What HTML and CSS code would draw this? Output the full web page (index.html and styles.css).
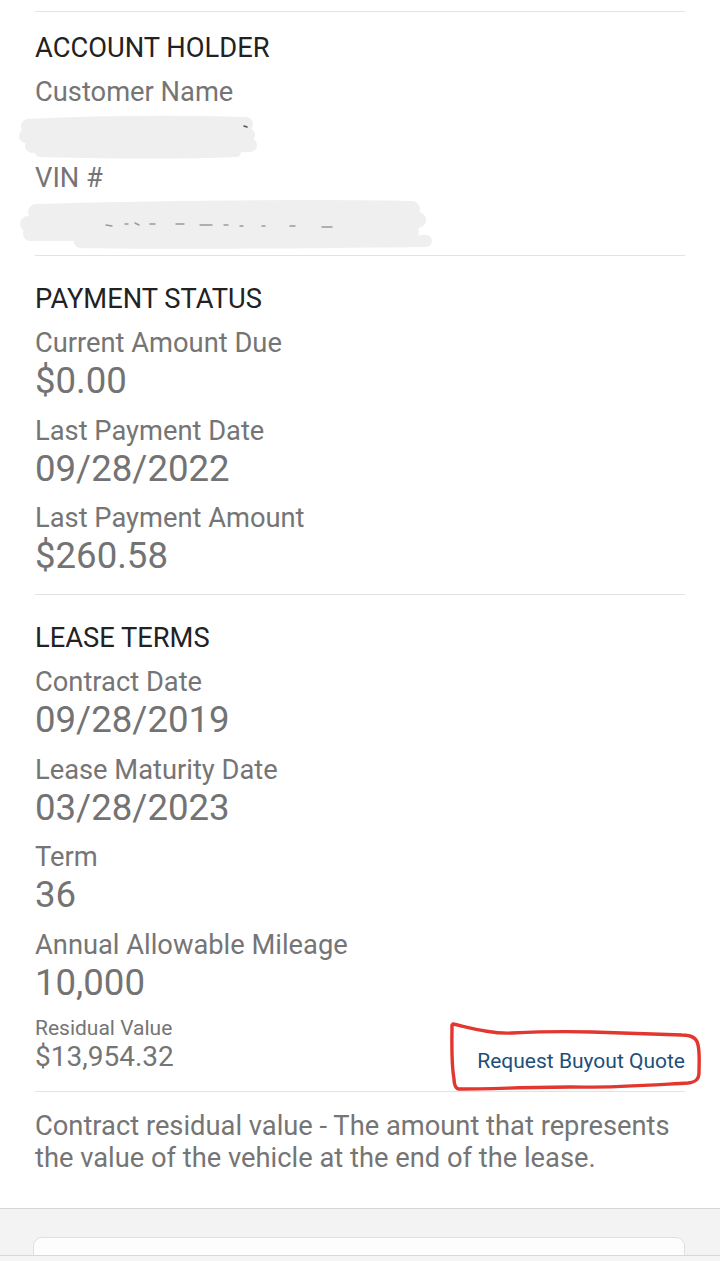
FILE: index.html
```html
<!DOCTYPE html>
<html lang="en">
<head>
<meta charset="utf-8">
<title>Lease Account</title>
<link rel="stylesheet" href="styles.css">
</head>
<body>
<main class="page">
  <section class="section section-first">
    <h2 class="heading">ACCOUNT HOLDER</h2>
    <div class="label">Customer Name</div>
    <svg class="redact redact-name" viewBox="0 0 260 48" width="260" height="48" aria-hidden="true">
      <g fill="none" stroke="#efefef" stroke-linecap="round" stroke-linejoin="round">
        <path d="M28 12 C90 9 170 8 246 10" stroke-width="14"/>
        <path d="M26 22 C100 22 180 20 248 21" stroke-width="14"/>
        <path d="M32 32 C110 34 190 33 250 31" stroke-width="14"/>
        <path d="M40 38 C120 40 190 40 236 38" stroke-width="10"/>
      </g>
      <path d="M244 12 l3 1" stroke="#555" stroke-width="1.6" stroke-linecap="round"/>
    </svg>
    <div class="label label-vin">VIN #</div>
    <svg class="redact redact-vin" viewBox="0 0 440 52" width="440" height="52" aria-hidden="true">
      <g fill="none" stroke="#efefef" stroke-linecap="round" stroke-linejoin="round">
        <path d="M36 12 C150 9 300 7 412 9" stroke-width="16"/>
        <path d="M28 24 C150 23 300 21 418 20" stroke-width="16"/>
        <path d="M30 34 C160 34 300 32 412 31" stroke-width="14"/>
        <path d="M80 42 C200 44 330 42 426 41" stroke-width="12"/>
      </g>
      <g stroke="#9a9a9a" stroke-width="1.4" stroke-linecap="round">
        <path d="M106 25 l6 1"/>
        <path d="M125 24 l3 0"/>
        <path d="M135 23 l4 2"/>
        <path d="M150 24 l5 0"/>
        <path d="M176 24 l8 0"/>
        <path d="M200 25 l12 0"/>
        <path d="M224 25 l4 0"/>
        <path d="M240 26 l3 0"/>
        <path d="M262 26 l3 0"/>
        <path d="M290 26 l5 0"/>
        <path d="M322 27 l10 0"/>
      </g>
    </svg>
  </section>

  <section class="section">
    <h2 class="heading">PAYMENT STATUS</h2>
    <div class="label">Current Amount Due</div>
    <div class="value">$0.00</div>
    <div class="label">Last Payment Date</div>
    <div class="value">09/28/2022</div>
    <div class="label">Last Payment Amount</div>
    <div class="value">$260.58</div>
  </section>

  <section class="section">
    <h2 class="heading">LEASE TERMS</h2>
    <div class="label">Contract Date</div>
    <div class="value">09/28/2019</div>
    <div class="label">Lease Maturity Date</div>
    <div class="value">03/28/2023</div>
    <div class="label">Term</div>
    <div class="value">36</div>
    <div class="label">Annual Allowable Mileage</div>
    <div class="value">10,000</div>

    <div class="residual-row">
      <div class="residual">
        <div class="small-label">Residual Value</div>
        <div class="small-value">$13,954.32</div>
      </div>
      <a class="buyout" href="#">Request Buyout Quote</a>
      <svg class="annotation" viewBox="0 0 255 72" width="255" height="72" aria-hidden="true">
        <path d="M3 4 C3 20 2 42 5 58 C5 64 7 68 10 68 C42 68 82 66 122 66 C162 67 202 64 239 62 C247 61 250 58 250 52 C250 42 251 32 249 24 C248 17 243 14 233 14 C203 13 173 12 143 11 C113 10 83 11 63 12 C43 13 22 7 4 3"
              fill="none" stroke="#e2362f" stroke-width="3.4" stroke-linecap="round" stroke-linejoin="round"/>
      </svg>
    </div>

    <p class="description">Contract residual value - The amount that represents the value of the vehicle at the end of the lease.</p>
  </section>

  <div class="footer-area">
    <div class="card"></div>
  </div>
</main>
<div class="bottom-bar"></div>
</body>
</html>
```
FILE: styles.css
```css
html, body {
  margin: 0;
  padding: 0;
  background: #ffffff;
}

body {
  font-family: Roboto, "Noto Sans", "Liberation Sans", sans-serif;
  color: #757575;
  overflow: hidden;
  height: 1261px;
}

.page {
  padding-top: 11px;
}

.section {
  margin: 0 35px 0 35px;
  border-top: 1px solid #e2e2e2;
  padding-top: 27px;
  padding-bottom: 16px;
}

.heading {
  margin: 0;
  font-size: 27.3px;
  font-weight: 400;
  line-height: 32px;
  color: #222222;
}

.label {
  font-size: 27.3px;
  line-height: 40px;
  margin-top: 7.5px;
  color: #757575;
}

.heading + .label {
  margin-top: 8px;
}

.value {
  font-size: 36.6px;
  line-height: 44px;
  color: #737373;
  margin-top: -4px;
}

.section-first {
  padding-top: 20px;
  padding-bottom: 3px;
}

.redact {
  display: block;
  margin-left: -35px;
}

.redact-name {
  margin-top: 2px;
}

.label-vin {
  margin-top: -4px;
}

.redact-vin {
  margin-top: 2px;
}

.residual-row {
  position: relative;
  display: flex;
  justify-content: space-between;
  align-items: flex-end;
  margin-top: 11px;
  padding-bottom: 17px;
  border-bottom: 1px solid #e2e2e2;
}

.small-label {
  font-size: 21px;
  line-height: 24px;
  color: #757575;
}

.small-value {
  font-size: 28px;
  line-height: 34px;
  color: #757575;
}

.buyout {
  font-size: 21px;
  line-height: 30px;
  color: #1e4f7b;
  text-decoration: none;
  margin-bottom: -2px;
}

.annotation {
  position: absolute;
  right: -19px;
  top: 5px;
}

.description {
  margin: 18px 0 0 0;
  font-size: 27.3px;
  line-height: 32px;
  color: #757575;
}

.footer-area {
  margin-top: 18px;
  border-top: 1px solid #d6d6d6;
  background: #f3f3f3;
  height: 60px;
  padding: 28px 35px 0 33px;
}

.card {
  height: 40px;
  background: #fdfdfd;
  border: 1px solid #e0e0e0;
  border-radius: 9px;
}

.bottom-bar {
  position: fixed;
  left: 0;
  right: 0;
  bottom: 0;
  height: 5px;
  background: #f4f5f4;
  border-top: 1px solid #d8d8d8;
}
```
